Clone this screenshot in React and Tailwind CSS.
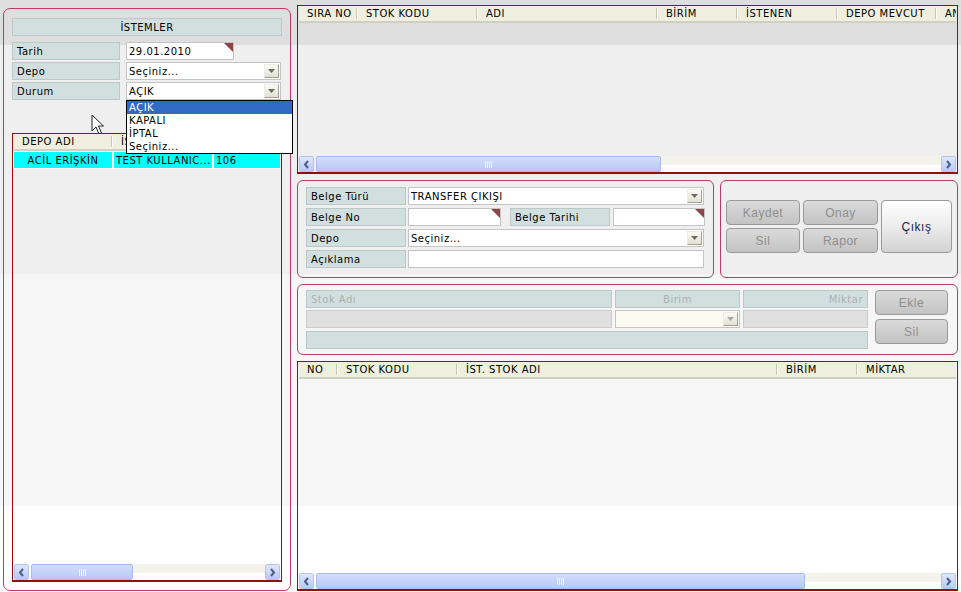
import React from 'react'

const dv = "font-['DejaVu_Sans',sans-serif] text-[10px] tracking-[0.5px]"
const ar = "font-['Liberation_Sans',Arial,sans-serif] text-[12px]"

const topCols = [
  ['SIRA NO', 'w-[59px]'],
  ['STOK KODU', 'w-[120px]'],
  ['ADI', 'w-[180px]'],
  ['BİRİM', 'w-[80px]'],
  ['İSTENEN', 'w-[100px]'],
  ['DEPO MEVCUT', 'w-[99px]'],
  ['ANA DEPO', 'w-[100px]'],
]

const bottomCols = [
  ['NO', 'w-[39px]'],
  ['STOK KODU', 'w-[120px]'],
  ['İST. STOK ADI', 'w-[320px]'],
  ['BİRİM', 'w-[80px]'],
  ['MİKTAR', 'w-[100px]'],
]

const leftCols = [
  ['DEPO ADI', 'w-[99px]'],
  ['İSTEYEN', 'w-[100px]'],
  ['ADET', 'w-[70px]'],
]

function Label({ className = '', children }) {
  return (
    <div className={`flex h-[18px] shrink-0 items-center border border-[#bcc8c8] bg-[#d1dfdf] px-[4px] ${className}`}>
      {children}
    </div>
  )
}

function Corner() {
  return (
    <svg className="absolute right-0 top-0" width="9" height="9">
      <polygon points="0,0 9,0 9,9" fill="#8c4444" />
    </svg>
  )
}

function Input({ className = '', corner, children }) {
  return (
    <div className={`relative flex h-[18px] shrink-0 items-center border border-[#c4c4c4] bg-white pl-[2px] ${className}`}>
      {children}
      {corner && <Corner />}
    </div>
  )
}

function DropBtn({ dim }) {
  return (
    <div className="mr-[1px] flex h-[14px] w-[15px] shrink-0 items-center justify-center border border-t-[#ecece4] border-l-[#ecece4] border-r-[#a2a292] border-b-[#a2a292] bg-gradient-to-b from-[#fbfbf4] to-[#e0e0d2]">
      <svg width="7" height="4">
        <polygon points="0,0 7,0 3.5,4" fill={dim ? '#a8a8a8' : '#6a6a6a'} />
      </svg>
    </div>
  )
}

function Select({ className = '', children, dim }) {
  return (
    <div className={`flex h-[18px] shrink-0 items-center border border-[#c4c4c4] pl-[2px] ${dim ? 'bg-[#fbfbf2]' : 'bg-white'} ${className}`}>
      <span className="flex-1 overflow-hidden whitespace-nowrap">{children}</span>
      <DropBtn dim={dim} />
    </div>
  )
}

function Chevron({ left }) {
  return (
    <svg width="7" height="9" viewBox="0 0 7 9">
      <polyline
        points={left ? '5,1 2,4.5 5,8' : '2,1 5,4.5 2,8'}
        fill="none"
        stroke="#4a5f88"
        strokeWidth="2"
      />
    </svg>
  )
}

function ScrollBtn({ left }) {
  return (
    <div className="flex h-full w-[15px] shrink-0 items-center justify-center rounded-[2px] border border-[#b3c4ee] bg-gradient-to-b from-[#dfe7fe] to-[#b8c9f5]">
      <Chevron left={left} />
    </div>
  )
}

function Scrollbar({ thumb }) {
  return (
    <div className="flex h-[16px] shrink-0 items-stretch">
      <ScrollBtn left />
      <div className={`ml-[2px] flex shrink-0 items-center justify-center rounded-[2px] border border-[#a8bbea] bg-gradient-to-b from-[#d2defd] to-[#b7c8f5] ${thumb}`}>
        <div className="flex h-[7px] gap-[1px]">
          <span className="w-[1px] bg-[#f2f5ff]" />
          <span className="w-[1px] bg-[#f2f5ff]" />
          <span className="w-[1px] bg-[#f2f5ff]" />
          <span className="w-[1px] bg-[#f2f5ff]" />
        </div>
      </div>
      <div className="flex-1 bg-[linear-gradient(to_bottom,#f3f3ec_0%,#f3f3ec_55%,#ffffff_55%)]" />
      <ScrollBtn />
    </div>
  )
}

function Header({ cols }) {
  return (
    <div className={`flex h-[17px] shrink-0 overflow-hidden border-b-2 border-[#cfcfc3] bg-[#efefdf] text-black ${dv}`}>
      {cols.map(([t, w]) => (
        <div key={t} className={`flex shrink-0 items-center ${w}`}>
          <span className="flex-1 overflow-hidden whitespace-nowrap pl-[8px]">{t}</span>
          <span className="h-[11px] w-[2px] border-l border-[#c6c6b6] bg-[#fbfbf4]" />
        </div>
      ))}
    </div>
  )
}

function Grid({ cols, thumb, className = '', children }) {
  return (
    <div className={`flex flex-col border border-b-2 border-[#9c0a0a] px-[1px] ${className}`}>
      <Header cols={cols} />
      <div className="flex-1 overflow-hidden">{children}</div>
      <Scrollbar thumb={thumb} />
    </div>
  )
}

function Btn({ className = '', children, on }) {
  return (
    <div
      className={`flex shrink-0 items-center justify-center rounded-[4px] border border-[#9a9a9a] ${ar} ${
        on
          ? 'bg-gradient-to-b from-white via-[#ececec] to-[#d2d2d2] text-[#1c1c4c]'
          : 'bg-gradient-to-b from-[#dadada] to-[#c3c3c3] text-[#8e8e8e]'
      } ${className}`}
    >
      {children}
    </div>
  )
}

function Cursor() {
  return (
    <svg className="absolute left-[91px] top-[114px]" width="14" height="22" viewBox="0 0 14 22">
      <path d="M1 1 L1 17 L5 13 L8 20 L10.5 19 L7.5 12 L12.5 12 Z" fill="#ffffff" stroke="#222222" strokeWidth="1" strokeLinejoin="round" />
    </svg>
  )
}

export default function App() {
  return (
    <div className={`relative flex h-[592px] w-[961px] overflow-hidden bg-[linear-gradient(to_bottom,#dedede_0px,#dedede_45px,#efefef_45px,#efefef_274px,#f6f6f6_274px,#f6f6f6_506px,#ffffff_506px)] pl-[3px] pt-[5px] text-black ${dv}`}>
      {/* İstemler */}
      <div className="relative z-10 mt-[3px] flex h-[583px] w-[288px] shrink-0 flex-col rounded-[7px] border border-[#bb3c62] px-[8px] pb-[8px] pt-[9px]">
        <div className="flex h-[18px] items-center justify-center border border-[#bcc8c8] bg-[#d1dfdf]">İSTEMLER</div>

        <div className="mt-[6px] flex gap-[6px]">
          <Label className="w-[108px]">Tarih</Label>
          <Input className="w-[108px]" corner>29.01.2010</Input>
        </div>
        <div className="mt-[2px] flex gap-[6px]">
          <Label className="w-[108px]">Depo</Label>
          <Select className="w-[155px]">Seçiniz...</Select>
        </div>
        <div className="mt-[2px] flex gap-[6px]">
          <Label className="w-[108px]">Durum</Label>
          <div className="relative">
            <Select className="w-[155px]">AÇIK</Select>
            <div className="absolute left-0 top-full z-20 w-[167px] border border-black bg-white">
              <div className="flex h-[13px] items-center bg-[#316ac5] pl-[2px] text-white">AÇIK</div>
              <div className="flex h-[13px] items-center pl-[2px]">KAPALI</div>
              <div className="flex h-[13px] items-center pl-[2px]">İPTAL</div>
              <div className="flex h-[13px] items-center pl-[2px]">Seçiniz...</div>
            </div>
          </div>
        </div>

        <Grid cols={leftCols} thumb="w-[102px]" className="mt-[33px] flex-1">
          <div className="mt-[1px] flex h-[17px] gap-[2px] border-b border-white bg-white">
            <div className="flex w-[98px] items-center justify-center bg-[#00ffff]">ACİL ERİŞKİN</div>
            <div className="flex w-[98px] items-center overflow-hidden whitespace-nowrap bg-[#00ffff] pl-[2px]">TEST KULLANIC...</div>
            <div className="flex flex-1 items-center bg-[#00ffff] pl-[2px]">106</div>
          </div>
        </Grid>
      </div>

      {/* Right side */}
      <div className="ml-[6px] flex w-[661px] shrink-0 flex-col">
        <Grid cols={topCols} thumb="w-[345px]" className="h-[169px]" />

        <div className="mt-[6px] flex h-[98px] gap-[6px]">
          <div className="flex w-[417px] flex-col gap-[3px] rounded-[6px] border border-[#bb3c62] px-[8px] pt-[6px]">
            <div className="flex gap-[2px]">
              <Label className="w-[100px]">Belge Türü</Label>
              <Select className="w-[296px]">TRANSFER ÇIKIŞI</Select>
            </div>
            <div className="flex gap-[2px]">
              <Label className="w-[100px]">Belge No</Label>
              <Input className="w-[93px]" corner />
              <Label className="ml-[7px] w-[100px]">Belge Tarihi</Label>
              <Input className="ml-[1px] w-[92px]" corner />
            </div>
            <div className="flex gap-[2px]">
              <Label className="w-[100px]">Depo</Label>
              <Select className="w-[296px]">Seçiniz...</Select>
            </div>
            <div className="flex gap-[2px]">
              <Label className="w-[100px]">Açıklama</Label>
              <Input className="w-[296px]" />
            </div>
          </div>

          <div className="flex flex-1 gap-[3px] rounded-[6px] border border-[#bb3c62] pl-[5px] pt-[19px]">
            <div className="grid h-[53px] grid-cols-[74px_75px] grid-rows-2 gap-[3px]">
              <Btn>Kaydet</Btn>
              <Btn>Onay</Btn>
              <Btn>Sil</Btn>
              <Btn>Rapor</Btn>
            </div>
            <Btn on className="h-[53px] w-[71px]">Çıkış</Btn>
          </div>
        </div>

        <div className="mt-[6px] flex h-[71px] rounded-[6px] border border-[#bb3c62] pl-[8px] pt-[5px]">
          <div className="flex w-[562px] flex-col gap-[2px] text-[#a9b1b1]">
            <div className="flex gap-[3px]">
              <Label className="w-[306px]">Stok Adı</Label>
              <Label className="w-[125px] justify-center">Birim</Label>
              <Label className="w-[125px] justify-end">Miktar</Label>
            </div>
            <div className="flex gap-[3px]">
              <div className="h-[18px] w-[306px] border border-[#cacaca] bg-[#e0e0e0]" />
              <Select dim className="w-[125px]" />
              <div className="h-[18px] w-[125px] border border-[#cacaca] bg-[#e0e0e0]" />
            </div>
            <Label className="mt-[1px] w-[562px]" />
          </div>
          <div className="ml-[7px] flex flex-col gap-[4px]">
            <Btn className="h-[25px] w-[73px]">Ekle</Btn>
            <Btn className="h-[25px] w-[73px]">Sil</Btn>
          </div>
        </div>

        <Grid cols={bottomCols} thumb="w-[489px]" className="mt-[6px] h-[230px]" />
      </div>

      <Cursor />
    </div>
  )
}
